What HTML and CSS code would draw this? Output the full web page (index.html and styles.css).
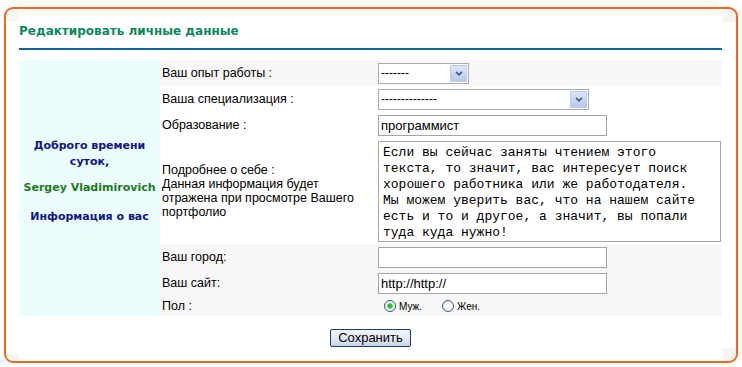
FILE: index.html
```html
<!DOCTYPE html>
<html lang="ru">
<head>
<meta charset="utf-8">
<title>Редактировать личные данные</title>
<link rel="stylesheet" href="styles.css">
</head>
<body>
<div class="box">
  <h2 class="title">Редактировать личные данные</h2>
  <form class="profile" action="#">
    <table class="form">
      <tr class="row gray">
        <td class="side" rowspan="7">
          <div class="greet">
            <p class="navy">Доброго времени суток,</p>
            <p class="name">Sergey Vladimirovich</p>
            <p class="navy">Информация о вас</p>
          </div>
        </td>
        <td class="lbl">Ваш опыт работы :</td>
        <td class="fld">
          <div class="sel sel-short">
            <select><option>-------</option></select>
            <span class="arrow"><svg width="8" height="5" viewBox="0 0 8 5"><path d="M1 0.8 L4 3.8 L7 0.8" fill="none" stroke="#4a5d80" stroke-width="1.7"/></svg></span>
          </div>
        </td>
      </tr>
      <tr class="row">
        <td class="lbl">Ваша специализация :</td>
        <td class="fld">
          <div class="sel sel-long">
            <select><option>--------------</option></select>
            <span class="arrow"><svg width="8" height="5" viewBox="0 0 8 5"><path d="M1 0.8 L4 3.8 L7 0.8" fill="none" stroke="#4a5d80" stroke-width="1.7"/></svg></span>
          </div>
        </td>
      </tr>
      <tr class="row">
        <td class="lbl">Образование :</td>
        <td class="fld"><input class="txt" type="text" value="программист"></td>
      </tr>
      <tr class="row tall">
        <td class="lbl">Подробнее о себе :<br>Данная информация будет отражена при просмотре Вашего портфолио</td>
        <td class="fld"><textarea class="about">Если вы сейчас заняты чтением этого текста, то значит, вас интересует поиск хорошего работника или же работодателя. Мы можем уверить вас, что на нашем сайте есть и то и другое, а значит, вы попали туда куда нужно!</textarea></td>
      </tr>
      <tr class="row gray">
        <td class="lbl">Ваш город:</td>
        <td class="fld"><input class="txt" type="text" value=""></td>
      </tr>
      <tr class="row gray">
        <td class="lbl">Ваш сайт:</td>
        <td class="fld"><input class="txt" type="text" value="http://http://"></td>
      </tr>
      <tr class="row gray short">
        <td class="lbl">Пол :</td>
        <td class="fld">
          <div class="sex">
            <label class="opt"><input type="radio" name="sex" checked> Муж.</label>
            <label class="opt"><input type="radio" name="sex"> Жен.</label>
          </div>
        </td>
      </tr>
    </table>
    <div class="actions"><button type="submit" class="btn">Сохранить</button></div>
  </form>
</div>
</body>
</html>
```
FILE: styles.css
```css
body
{
	margin:0;
	background:#fff;
	font-family:"Liberation Sans", Arial, sans-serif;
	font-size:12.5px;
	color:#000;
}
.box
{
	margin:7px 4px 0 4px;
	border:2px solid #ef6a1f;
	border-radius:9px;
	padding:0 14px 14px 13px;
	background:
		linear-gradient(#f6f5f1,#f6f5f1) left top/13px 12px no-repeat,
		linear-gradient(#f6f5f1,#f6f5f1) right top/13px 13px no-repeat,
		linear-gradient(#f6f5f1,#f6f5f1) left bottom/13px 7px no-repeat,
		linear-gradient(#f6f5f1,#f6f5f1) right bottom/13px 13px no-repeat,
		#fff;
}
.title
{
	margin:0;
	padding:14px 0 9px;
	border-bottom:2px solid #0c6796;
	font-family:"DejaVu Sans", Verdana, sans-serif;
	font-size:12px;
	line-height:16px;
	font-weight:bold;
	color:#0a8a5c;
}
.profile
{
	margin:0;
}
.form
{
	width:100%;
	margin-top:10px;
	border-collapse:collapse;
	border-spacing:0;
}
.form td
{
	padding:0;
	vertical-align:middle;
}
.row
{
	height:26px;
}
.row.tall
{
	height:106px;
}
.row.short
{
	height:20px;
}
.gray
{
	background:#f7f7f7;
}
.side
{
	width:141px;
	background:#ebfdfd;
	text-align:center;
}
.greet
{
	padding-bottom:13px;
	font-family:"DejaVu Sans", Verdana, sans-serif;
	font-size:11px;
	font-weight:bold;
	line-height:16px;
}
.greet p
{
	margin:0;
}
.navy
{
	color:#10168b;
}
.name
{
	color:#1f7a1f;
	margin:10px 0 13px !important;
}
.lbl
{
	width:203px;
	padding-left:2px !important;
	padding-right:8px !important;
	line-height:14px;
}
.fld
{
	padding-left:5px !important;
}
.sel
{
	display:flex;
	box-sizing:border-box;
	height:21px;
	border:1px solid #a5acb2;
	background:#fff;
}
.sel-short
{
	width:91px;
}
.sel-long
{
	width:211px;
}
.sel select
{
	flex:1;
	min-width:0;
	-webkit-appearance:none;
	appearance:none;
	border:0;
	outline:0;
	background:transparent;
	padding:0 0 0 2px;
	font-family:"Liberation Sans", Arial, sans-serif;
	font-size:12px;
	color:#000;
}
.arrow
{
	display:flex;
	align-items:center;
	justify-content:center;
	width:15px;
	margin:1px;
	border:1px solid #b9cbeb;
	border-radius:1px;
	background:linear-gradient(#dde7fb,#b5c7ee);
}
.txt
{
	display:block;
	box-sizing:border-box;
	width:229px;
	height:21px;
	margin:0;
	padding:0 2px;
	border:1px solid #a5a5a5;
	background:#fff;
	font-family:"Liberation Sans", Arial, sans-serif;
	font-size:13px;
	color:#000;
	outline:0;
}
.about
{
	display:block;
	box-sizing:border-box;
	width:343px;
	height:101px;
	margin:0;
	padding:3px 15px 0 4px;
	border:1px solid #a5a5a5;
	resize:none;
	overflow:hidden;
	font-family:"Liberation Mono", "Courier New", monospace;
	font-size:13px;
	line-height:16px;
	color:#000;
	outline:0;
}
.sex
{
	display:flex;
	align-items:center;
	gap:20px;
	padding-left:6px;
}
.opt
{
	display:flex;
	align-items:center;
	gap:3px;
	font-size:10px;
}
.opt input
{
	-webkit-appearance:none;
	appearance:none;
	width:12px;
	height:12px;
	margin:0;
	border:1px solid #2b5a8a;
	border-radius:50%;
	background:radial-gradient(circle at 60% 60%, #fff 40%, #dcdcd6 100%);
}
.opt input:checked
{
	background:radial-gradient(circle, #2cb52c 0, #3fbf3f 2px, #b8e6b8 3px, #fff 4px, #e3e3de 100%);
}
.actions
{
	padding-top:13px;
	text-align:center;
}
.btn
{
	width:81px;
	height:18px;
	padding:0;
	border:1px solid #1e3d6c;
	border-radius:2px;
	background:linear-gradient(#f3f6fb,#dfe7f3 60%,#c4d2e8);
	font-family:"Liberation Sans", Arial, sans-serif;
	font-size:13px;
	line-height:16px;
	color:#000;
}
```
